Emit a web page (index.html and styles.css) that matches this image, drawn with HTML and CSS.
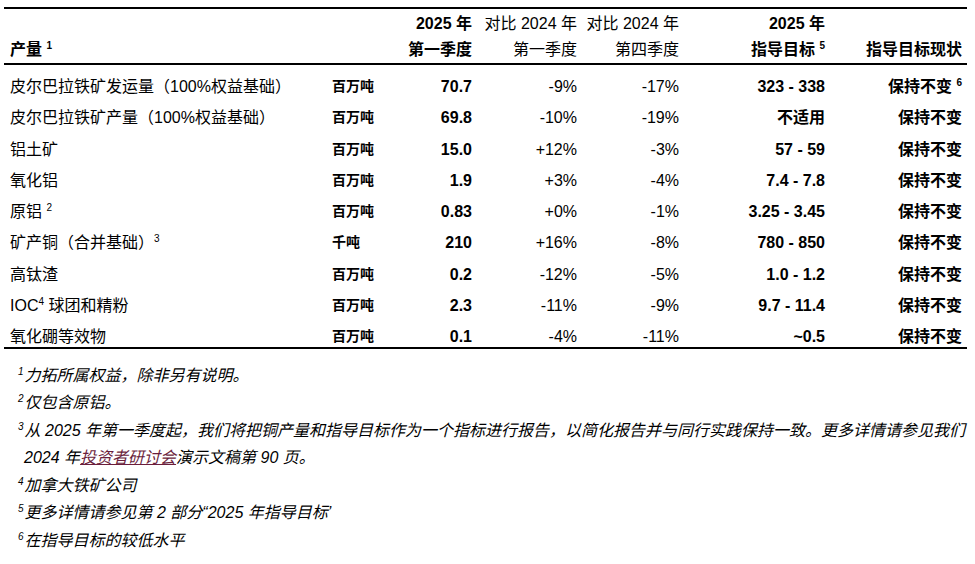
FILE: index.html
```html
<!DOCTYPE html>
<html lang="zh-CN">
<head>
<meta charset="utf-8">
<title>产量</title>
<link rel="stylesheet" href="styles.css">
</head>
<body>
<div class="page">
  <table class="prod">
    <colgroup>
      <col class="c-lab"><col class="c-unit"><col class="c-q1"><col class="c-v1"><col class="c-v4"><col class="c-gd"><col class="c-st">
    </colgroup>
    <thead>
      <tr class="h1">
        <th class="lab"></th>
        <th class="unit"></th>
        <th class="num b">2025 年</th>
        <th class="num">对比 2024 年</th>
        <th class="num">对比 2024 年</th>
        <th class="num b">2025 年</th>
        <th class="num b"></th>
      </tr>
      <tr class="h2">
        <th class="lab b">产量 <sup>1</sup></th>
        <th class="unit"></th>
        <th class="num b">第一季度</th>
        <th class="num">第一季度</th>
        <th class="num">第四季度</th>
        <th class="num b">指导目标 <sup>5</sup></th>
        <th class="num b">指导目标现状</th>
      </tr>
    </thead>
    <tbody>
      <tr><td class="lab">皮尔巴拉铁矿发运量（100%权益基础）</td><td class="unit">百万吨</td><td class="num b">70.7</td><td class="num">-9%</td><td class="num">-17%</td><td class="num b">323 - 338</td><td class="num b">保持不变 <sup>6</sup></td></tr>
      <tr><td class="lab">皮尔巴拉铁矿产量（100%权益基础）</td><td class="unit">百万吨</td><td class="num b">69.8</td><td class="num">-10%</td><td class="num">-19%</td><td class="num b">不适用</td><td class="num b">保持不变</td></tr>
      <tr><td class="lab">铝土矿</td><td class="unit">百万吨</td><td class="num b">15.0</td><td class="num">+12%</td><td class="num">-3%</td><td class="num b">57 - 59</td><td class="num b">保持不变</td></tr>
      <tr><td class="lab">氧化铝</td><td class="unit">百万吨</td><td class="num b">1.9</td><td class="num">+3%</td><td class="num">-4%</td><td class="num b">7.4 - 7.8</td><td class="num b">保持不变</td></tr>
      <tr><td class="lab">原铝 <sup>2</sup></td><td class="unit">百万吨</td><td class="num b">0.83</td><td class="num">+0%</td><td class="num">-1%</td><td class="num b">3.25 - 3.45</td><td class="num b">保持不变</td></tr>
      <tr><td class="lab">矿产铜（合并基础）<sup>3</sup></td><td class="unit">千吨</td><td class="num b">210</td><td class="num">+16%</td><td class="num">-8%</td><td class="num b">780 - 850</td><td class="num b">保持不变</td></tr>
      <tr><td class="lab">高钛渣</td><td class="unit">百万吨</td><td class="num b">0.2</td><td class="num">-12%</td><td class="num">-5%</td><td class="num b">1.0 - 1.2</td><td class="num b">保持不变</td></tr>
      <tr><td class="lab">IOC<sup>4</sup> 球团和精粉</td><td class="unit">百万吨</td><td class="num b">2.3</td><td class="num">-11%</td><td class="num">-9%</td><td class="num b">9.7 - 11.4</td><td class="num b">保持不变</td></tr>
      <tr class="last"><td class="lab">氧化硼等效物</td><td class="unit">百万吨</td><td class="num b">0.1</td><td class="num">-4%</td><td class="num">-11%</td><td class="num b">~0.5</td><td class="num b">保持不变</td></tr>
    </tbody>
  </table>

  <div class="notes">
    <p><sup>1</sup>力拓所属权益，除非另有说明。</p>
    <p><sup>2</sup>仅包含原铝。</p>
    <p><sup>3</sup>从 2025 年第一季度起，我们将把铜产量和指导目标作为一个指标进行报告，以简化报告并与同行实践保持一致。更多详情请参见我们<br>2024 年<a href="#">投资者研讨会</a>演示文稿第 90 页。</p>
    <p><sup>4</sup>加拿大铁矿公司</p>
    <p><sup>5</sup>更多详情请参见第 2 部分“2025 年指导目标’</p>
    <p><sup>6</sup>在指导目标的较低水平</p>
  </div>
</div>
</body>
</html>
```

FILE: styles.css
```css
html, body {
  margin: 0;
  padding: 0;
  background: #fff;
}

body {
  font-family: "Liberation Sans", "Noto Sans CJK SC", Arial, sans-serif;
  color: #000;
}

.page {
  padding: 7px 0 0 4px;
}

.prod {
  width: 963px;
  border-collapse: separate;
  border-spacing: 0;
  table-layout: fixed;
  font-size: 16px;
}

.c-lab { width: 328px; }
.c-unit { width: 68px; }
.c-q1 { width: 77px; }
.c-v1 { width: 105px; }
.c-v4 { width: 102px; }
.c-gd { width: 146px; }
.c-st { width: 137px; }

.prod th,
.prod td {
  padding: 0 5px 0 0;
  white-space: nowrap;
  font-weight: normal;
}

.prod .lab {
  text-align: left;
  padding-left: 6px;
}

.prod .unit {
  text-align: left;
  padding-right: 0;
}

.prod .num {
  text-align: right;
}

.prod .b {
  font-weight: bold;
}

.h1 th {
  border-top: 2px solid #000;
  padding-top: 6px;
  padding-bottom: 8px;
  line-height: 18px;
}

.h2 th {
  border-bottom: 2px solid #000;
  padding-bottom: 4px;
  line-height: 18px;
}

.prod tbody td {
  padding-top: 13px;
  line-height: 18.3px;
  vertical-align: top;
}

.prod tbody td.unit {
  font-size: 14px;
  font-weight: bold;
  line-height: 16px;
}

.prod tr.last td {
  border-bottom: 2px solid #000;
}

sup {
  font-size: 10px;
  line-height: 0;
  vertical-align: 6px;
}

.notes {
  margin-top: 13px;
  font-size: 16px;
  font-style: italic;
}

.notes p {
  margin: 0;
  line-height: 27.5px;
  padding-left: 20px;
  text-indent: -6px;
  white-space: nowrap;
}

.notes sup {
  font-size: 10px;
  vertical-align: 6px;
  margin-right: 1px;
}

.notes a {
  color: #6b1e3c;
  text-decoration: underline;
}
```
